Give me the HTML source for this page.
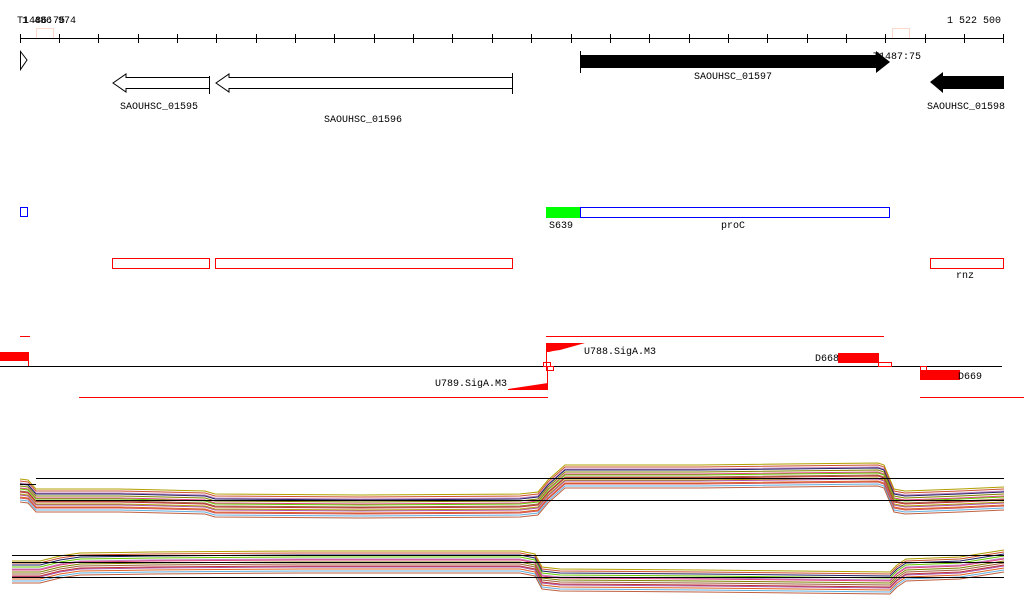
<!DOCTYPE html>
<html><head><meta charset="utf-8"><style>
html,body{margin:0;padding:0;background:#fff;}
svg{display:block}
text{font-family:"Liberation Mono",monospace;font-size:10px;fill:#000}
</style></head><body>
<svg width="1024" height="611" viewBox="0 0 1024 611" xmlns="http://www.w3.org/2000/svg">
<defs>
<path id="b1" fill="none" d="M20,480 L28,481 L36,490 L120,490 L205,492 L215,495 L360,496 L520,495 L538,493 L548,481 L565,466 L700,466 L878,464 L884,466 L894,490 L905,492 L960,490 L1004,488"/>
<path id="b2" fill="none" d="M12,563 L40,563 L60,558 L80,555 L150,554 L300,553 L520,553 L535,556 L542,569 L560,571 L700,572 L890,574 L897,567 L906,561 L960,559 L1004,552"/>
</defs>
<text x="17" y="23">T1486:75</text>
<text x="22" y="23">1 486 974</text>
<text x="947" y="23">1 522 500</text>
<rect x="36.5" y="28.5" width="17" height="10" fill="none" stroke="#fcd8cc"/>
<rect x="892.5" y="28.5" width="17" height="10" fill="none" stroke="#fcd8cc"/>
<line x1="20" y1="38.5" x2="1004" y2="38.5" stroke="#000"/>
<g stroke="#000">
<path d="M20.5,34V43M59.5,34V43M98.5,34V43M138.5,34V43M177.5,34V43M216.5,34V43M256.5,34V43M295.5,34V43M334.5,34V43M374.5,34V43M413.5,34V43M452.5,34V43M492.5,34V43M531.5,34V43M571.5,34V43M610.5,34V43M649.5,34V43M689.5,34V43M728.5,34V43M767.5,34V43M807.5,34V43M846.5,34V43M885.5,34V43M925.5,34V43M964.5,34V43M1003.5,34V43"/>
</g>
<path d="M20.5,51.5 L27,60 L20.5,69.5 Z" fill="none" stroke="#000"/>
<path d="M209.5,76 L209.5,94 M209,77.5 L126,77.5 L126,74 L113,83 L126,92 L126,88.5 L209,88.5" fill="none" stroke="#000"/>
<path d="M512.5,73 L512.5,94 M512,77.5 L229,77.5 L229,74 L216,83 L229,92 L229,88.5 L512,88.5" fill="none" stroke="#000"/>
<text x="120" y="109">SAOUHSC_01595</text>
<text x="324" y="122">SAOUHSC_01596</text>
<path d="M580.5,51 V73" stroke="#000"/>
<path d="M580,55 L876,55 L876,51 L890,62 L876,73 L876,68 L580,68 Z" fill="#000"/>
<text x="873" y="59">T1487:75</text>
<text x="694" y="79">SAOUHSC_01597</text>
<path d="M1004,76 L943,76 L943,72 L930,82 L943,93 L943,89 L1004,89 Z" fill="#000"/>
<text x="927" y="109">SAOUHSC_01598</text>
<rect x="20.5" y="207.5" width="7" height="9" fill="none" stroke="#0000ff"/>
<rect x="546" y="207" width="34" height="11" fill="#00ff00"/>
<rect x="580.5" y="207.5" width="309" height="10" fill="none" stroke="#0000ff"/>
<text x="549" y="228">S639</text>
<text x="721" y="228">proC</text>
<rect x="112.5" y="258.5" width="97" height="10" fill="none" stroke="#f00"/>
<rect x="215.5" y="258.5" width="297" height="10" fill="none" stroke="#f00"/>
<rect x="930.5" y="258.5" width="73" height="10" fill="none" stroke="#f00"/>
<text x="956" y="278">rnz</text>
<line x1="20" y1="336.5" x2="30" y2="336.5" stroke="#f00"/>
<line x1="546" y1="336.5" x2="884" y2="336.5" stroke="#f00"/>
<rect x="0" y="352" width="29" height="9" fill="#f00"/>
<line x1="28.5" y1="352" x2="28.5" y2="366" stroke="#f00"/>
<line x1="0" y1="366.5" x2="1002" y2="366.5" stroke="#000"/>
<path d="M546,343 L585,343 L560,350 L553,351 L549,352 L546,352 Z" fill="#f00"/>
<line x1="546.5" y1="343" x2="546.5" y2="366" stroke="#f00"/>
<text x="584" y="354">U788.SigA.M3</text>
<rect x="543.5" y="362.5" width="7" height="4" fill="none" stroke="#f00"/>
<rect x="546.5" y="366.5" width="7" height="4" fill="none" stroke="#f00"/>
<line x1="547.5" y1="367" x2="547.5" y2="390" stroke="#f00"/>
<path d="M508,389 L548,383 L548,390 L508,390 Z" fill="#f00"/>
<text x="435" y="386">U789.SigA.M3</text>
<line x1="79" y1="397.5" x2="548" y2="397.5" stroke="#f00"/>
<text x="815" y="361">D668</text>
<rect x="838" y="353" width="41" height="10" fill="#f00"/>
<rect x="878.5" y="362.5" width="13" height="4" fill="none" stroke="#f00"/>
<rect x="920.5" y="366.5" width="6" height="4" fill="none" stroke="#f00"/>
<rect x="920" y="370" width="40" height="10" fill="#f00"/>
<text x="958" y="379">D669</text>
<line x1="920" y1="397.5" x2="1024" y2="397.5" stroke="#f00"/>
<g stroke-width="1">
<use href="#b1" stroke="#b0a000" transform="translate(0,-1)"/>
<use href="#b1" stroke="#cc5030" transform="translate(0,1)"/>
<use href="#b1" stroke="#c080c0" transform="translate(0,3)"/>
<use href="#b1" stroke="#222266" transform="translate(0,4)"/>
<use href="#b1" stroke="#808000" transform="translate(0,6)"/>
<use href="#b1" stroke="#e04080" transform="translate(0,8)"/>
<use href="#b1" stroke="#66cc00" transform="translate(0,9)"/>
<use href="#b1" stroke="#a06040" transform="translate(0,11)"/>
<use href="#b1" stroke="#c03030" transform="translate(0,12)"/>
<use href="#b1" stroke="#b0a000" transform="translate(0,14)"/>
<use href="#b1" stroke="#aa55aa" transform="translate(0,15)"/>
<use href="#b1" stroke="#e06020" transform="translate(0,17)"/>
<use href="#b1" stroke="#d05050" transform="translate(0,18)"/>
<use href="#b1" stroke="#60b0e0" transform="translate(0,20)"/>
<use href="#b1" stroke="#c06040" transform="translate(0,22)"/>
</g>
<line x1="36" y1="478.5" x2="1004" y2="478.5" stroke="#000"/>
<line x1="36" y1="500.5" x2="1004" y2="500.5" stroke="#000"/>
<line x1="20" y1="484.5" x2="36" y2="484.5" stroke="#000"/>
<g stroke-width="1">
<use href="#b2" stroke="#b0a000" transform="translate(0,-2)"/>
<use href="#b2" stroke="#cc5030" transform="translate(0,0)"/>
<use href="#b2" stroke="#222266" transform="translate(0,2)"/>
<use href="#b2" stroke="#66cc00" transform="translate(0,4)"/>
<use href="#b2" stroke="#c080c0" transform="translate(0,6)"/>
<use href="#b2" stroke="#e04080" transform="translate(0,7)"/>
<use href="#b2" stroke="#808000" transform="translate(0,9)"/>
<use href="#b2" stroke="#a06040" transform="translate(0,11)"/>
<use href="#b2" stroke="#c03030" transform="translate(0,13)"/>
<use href="#b2" stroke="#aa55aa" transform="translate(0,14)"/>
<use href="#b2" stroke="#e06020" transform="translate(0,16)"/>
<use href="#b2" stroke="#60b0e0" transform="translate(0,18)"/>
<use href="#b2" stroke="#c06040" transform="translate(0,20)"/>
</g>
<line x1="12" y1="555.5" x2="1004" y2="555.5" stroke="#000"/>
<line x1="12" y1="562.5" x2="1004" y2="562.5" stroke="#000"/>
<line x1="12" y1="577.5" x2="1004" y2="577.5" stroke="#000"/>
</svg>
</body></html>
